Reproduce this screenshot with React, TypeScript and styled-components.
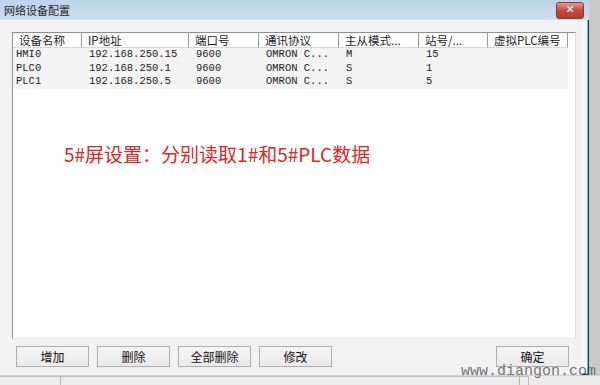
import styled, { createGlobalStyle } from 'styled-components';

const GlobalStyle = createGlobalStyle`
  html, body {
    margin: 0;
    padding: 0;
    background: #c9c9c9;
  }
  body {
    font-family: "Noto Sans CJK SC", "Liberation Sans", sans-serif;
    overflow: hidden;
  }
`;

const columns = [
  { title: '设备名称', width: 69 },
  { title: 'IP地址', width: 107 },
  { title: '端口号', width: 70 },
  { title: '通讯协议', width: 80 },
  { title: '主从模式...', width: 80 },
  { title: '站号/...', width: 69 },
  { title: '虚拟PLC编号', width: 80 },
];

const devices = [
  ['HMI0', '192.168.250.15', '9600', 'OMRON C...', 'M', '15', ''],
  ['PLC0', '192.168.250.1', '9600', 'OMRON C...', 'S', '1', ''],
  ['PLC1', '192.168.250.5', '9600', 'OMRON C...', 'S', '5', ''],
];

const Page = styled.div`
  position: relative;
  width: 600px;
  height: 385px;
  display: flex;
  flex-direction: column;
`;

const Window = styled.div`
  width: 589px;
  height: 375px;
  display: flex;
  flex-direction: column;
  background: #f6f8fb;
  box-shadow: inset -1px -1px 0 #1b3448, inset -2px -2px 0 #6ec0dc;
`;

const TitleBar = styled.div`
  height: 20px;
  flex-shrink: 0;
  display: flex;
  align-items: center;
  justify-content: space-between;
  padding-left: 4px;
  padding-right: 5px;
  background: linear-gradient(#bdd3ea, #cfdff0);
`;

const Title = styled.span`
  font-size: 11px;
  color: #262626;
  line-height: 1;
`;

const CloseButton = styled.div`
  width: 26px;
  height: 15px;
  margin-top: 1px;
  border: 1px solid #8a3a32;
  border-radius: 3px;
  background: linear-gradient(#e59a90, #c6493b 50%, #b83a2d);
  color: #fff;
  font-family: "DejaVu Sans", sans-serif;
  font-weight: bold;
  font-size: 11px;
  line-height: 14px;
  text-align: center;
`;

const Client = styled.div`
  flex: 1;
  display: flex;
  flex-direction: column;
  margin-right: 7px;
  padding: 11px 6px 0 12px;
  background: #f2f2f2;
  border-top: 1px solid #fbfbfb;
`;

const ListBox = styled.div`
  height: 305px;
  display: flex;
  flex-direction: column;
  background: #fff;
  border: 1px solid #8d9096;
  border-right-color: #e0e0e0;
  border-bottom-color: #e6e6e6;
`;

const HeaderRow = styled.div`
  display: flex;
  height: 15px;
  background: #fff;
`;

const HeaderCell = styled.div<{ $w: number }>`
  width: ${({ $w }) => $w}px;
  height: 15px;
  flex-shrink: 0;
  box-sizing: border-box;
  padding-left: 6px;
  border-right: 1px solid #9c9c9c;
  border-bottom: 1px solid #d8d8d8;
  font-size: 11.5px;
  line-height: 14px;
  color: #1c1c1c;
  white-space: nowrap;
`;

const Row = styled.div`
  display: flex;
  width: 555px;
  height: 13.5px;
  background: #f4f4f4;
`;

const Cell = styled.div<{ $w: number; $first?: boolean }>`
  width: ${({ $w }) => $w}px;
  flex-shrink: 0;
  box-sizing: border-box;
  padding-left: ${({ $first }) => ($first ? 3 : 7)}px;
  font-family: "Liberation Mono", monospace;
  font-size: 10.5px;
  line-height: 13.5px;
  color: #222;
  white-space: nowrap;
`;

const Note = styled.div`
  margin: 53px 0 0 51px;
  font-size: 19px;
  line-height: 24px;
  color: #d8262b;
  white-space: nowrap;
`;

const ButtonBar = styled.div`
  display: flex;
  gap: 8px;
  margin-top: 7px;
  padding-left: 4px;
`;

const Button = styled.div`
  width: 73px;
  height: 21px;
  box-sizing: border-box;
  border: 1px solid #adadad;
  background: linear-gradient(#f4f4f4, #ebebeb);
  font-size: 12px;
  line-height: 19px;
  text-align: center;
  color: #111;
`;

const OkButton = styled(Button)`
  margin-left: auto;
  margin-right: 7px;
`;

const BottomStrip = styled.div`
  flex: 1;
  display: flex;
  background: #ececec;
  border-top: 1px solid #d0d0d0;
`;

const StripCell = styled.div<{ $w: number }>`
  width: ${({ $w }) => $w}px;
  flex-shrink: 0;
  border-right: 1px solid #b8b8b8;
  border-top: 1px solid #c4c4c4;
`;

const Watermark = styled.div`
  position: absolute;
  left: 461px;
  top: 366px;
  font-family: "Liberation Mono", monospace;
  font-size: 15px;
  line-height: 12px;
  color: rgba(70, 70, 70, 0.75);
`;

const App = () => {
  return (
    <Page>
      <GlobalStyle />
      <Window>
        <TitleBar>
          <Title>网络设备配置</Title>
          <CloseButton>✕</CloseButton>
        </TitleBar>
        <Client>
          <ListBox>
            <HeaderRow>
              {columns.map(col => (
                <HeaderCell key={col.title} $w={col.width}>
                  {col.title}
                </HeaderCell>
              ))}
            </HeaderRow>
            {devices.map(device => (
              <Row key={device[0]}>
                {device.map((value, i) => (
                  <Cell key={i} $w={columns[i].width} $first={i === 0}>
                    {value}
                  </Cell>
                ))}
              </Row>
            ))}
            <Note>5#屏设置：分别读取1#和5#PLC数据</Note>
          </ListBox>
          <ButtonBar>
            <Button>增加</Button>
            <Button>删除</Button>
            <Button>全部删除</Button>
            <Button>修改</Button>
            <OkButton>确定</OkButton>
          </ButtonBar>
        </Client>
      </Window>
      <BottomStrip>
        <StripCell $w={60} />
        <StripCell $w={458} />
        <StripCell $w={8} />
      </BottomStrip>
      <Watermark>www.diangon.com</Watermark>
    </Page>
  );
};

export default App;
